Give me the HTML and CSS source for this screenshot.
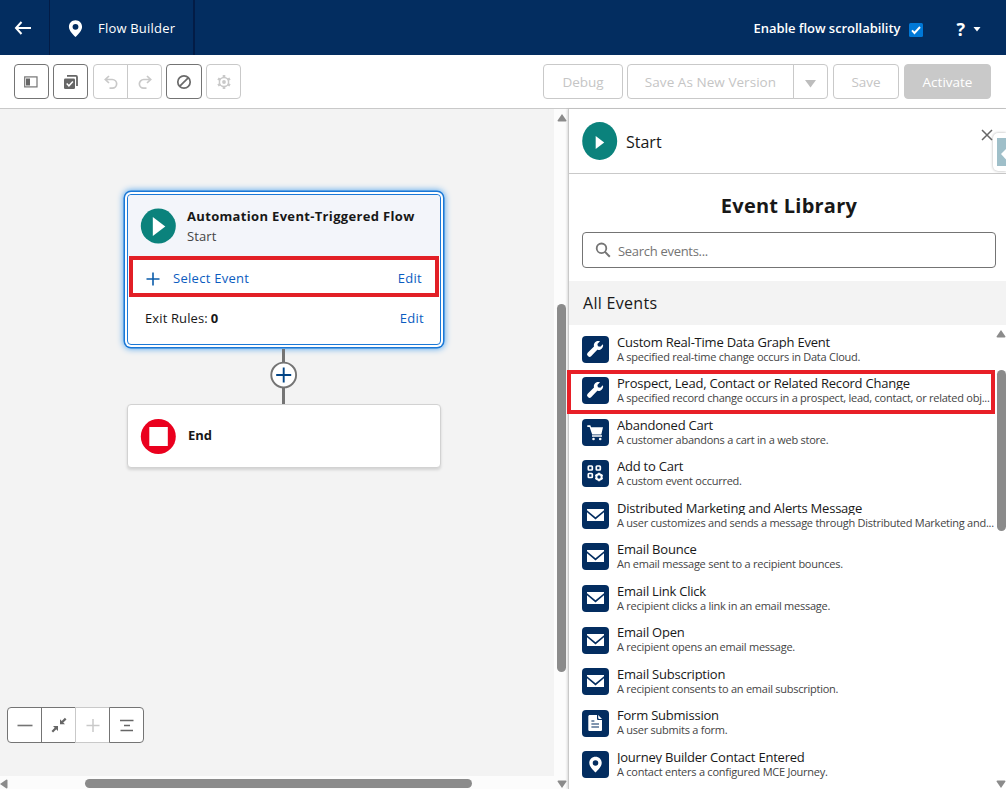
FILE: index.html
```html
<!DOCTYPE html>
<html lang="en">
<head>
<meta charset="utf-8">
<title>Flow Builder</title>
<link rel="stylesheet" href="styles.css">
</head>
<body>
<svg class="symbols" width="0" height="0" aria-hidden="true">
  <symbol id="pin" viewBox="0 0 24 24"><path fill-rule="evenodd" d="M12 1.500c-4.700 0-8.300 3.600-8.300 8.200 0 5 4.700 9.200 8.300 13 3.600-3.800 8.300-8 8.300-13C20.300 5.100 16.700 1.500 12 1.500zm0 4.700a3.700 3.700 0 1 1 0 7.400 3.700 3.700 0 0 1 0-7.400z"/></symbol>
  <symbol id="mail" viewBox="0 0 27 27"><path d="M5 7h17v1.200l-8.500 7-8.500-7z"/><path d="M5 10.300l8.500 7.200 8.500-7.200v8.700H5z"/></symbol>
  <symbol id="wrench" viewBox="0 0 27 27"><path d="M20.900 8.300l-2.600 2.500-2.400-.5-.5-2.300 2.600-2.700c-1.700-.6-3.600-.3-4.900 1-1.200 1.200-1.500 2.700-1.100 4.200l-6.300 6.300a2 2 0 0 0 0 2.900l.5.500a2 2 0 0 0 2.900 0l6.200-6.400c1.500.4 3.200 0 4.300-1.100 1.300-1.200 1.900-2.900 1.300-4.400z"/></symbol>
  <symbol id="cart" viewBox="0 0 27 27"><path d="M5.300 6.300h3l.8 2H21l-1.700 7.200h-9.100L7.600 8h-2.300z"/><path d="M10 16.200h10v1.600H10z"/><circle cx="11.500" cy="20" r="1.300"/><circle cx="18.200" cy="20" r="1.300"/></symbol>
  <symbol id="grid" viewBox="0 0 27 27"><g fill="none" stroke="#fff" stroke-width="1.700"><rect x="6.300" y="6" width="4" height="4" rx=".7"/><rect x="14.300" y="6" width="4" height="4" rx=".7"/><rect x="6.300" y="13.500" width="4" height="4" rx=".7"/><circle cx="17" cy="17" r="2.700" stroke-width="2"/><path d="M17 12.800v1.500M17 19.700v1.500M13.400 14.900l1.200.7M19.400 18.400l1.200.7M13.400 19.100l1.200-.7M19.400 15.600l1.200-.7"/></g></symbol>
  <symbol id="form" viewBox="0 0 27 27"><path d="M8 5h7v3.500c0 1 .6 1.500 1.500 1.500H20v9.700c0 .8-.5 1.300-1.300 1.300H7.800c-1 0-1.500-.5-1.500-1.300V6.500C6.300 5.500 7 5 8 5z"/><path d="M16.200 5l3.800 3.900h-3c-.5 0-.8-.3-.8-.8z"/><path d="M9.400 11h3M9.400 14h7.600M9.400 17h7.600" stroke="#032d60" stroke-width="1.200"/></symbol>
</svg>
<header class="topbar">
  <a class="back"><svg width="18" height="14" viewBox="0 0 18 14"><path d="M7.500 1L2 7l5.500 6M2.300 7H17" fill="none" stroke="#fff" stroke-width="2"/></svg></a>
  <div class="app"><svg class="app-pin" width="19" height="19"><use href="#pin"/></svg><span class="app-name">Flow Builder</span></div>
  <div class="topright">
    <span class="enable">Enable flow scrollability</span>
    <svg class="check" width="14" height="14" viewBox="0 0 14 14"><rect width="14" height="14" rx="1.500" fill="#0078d7"/><path d="M3 7.300l2.500 2.700L11 4" fill="none" stroke="#fff" stroke-width="1.900"/></svg>
    <span class="help">?</span>
    <svg class="caret" width="8" height="5" viewBox="0 0 8 5"><path d="M.5 0h7L4 4.600z" fill="#fff"/></svg>
  </div>
</header>
<nav class="toolbar">
  <div class="btn on"><svg class="toggle" width="14" height="12" viewBox="0 0 14 12"><rect x=".7" y=".9" width="12.300" height="10" fill="none" stroke="#747474" stroke-width="1.200"/><path d="M2 2.500h4v7H2z" fill="#666"/></svg></div>
  <div class="btn on"><svg width="16" height="16" viewBox="0 0 16 16"><path d="M4 1.900h9c.6 0 1 .4 1 1v9" fill="none" stroke="#666" stroke-width="1.800"/><rect x="1" y="4.500" width="11" height="10.500" rx="1.300" fill="#666"/><path d="M3.700 9.500l2.200 2.300 4-4.300" fill="none" stroke="#fff" stroke-width="1.500"/></svg></div>
  <div class="group history">
    <div class="btn"><svg width="16" height="16" viewBox="0 0 16 16"><path d="M6 2L2.300 5.500 6 9M2.500 5.500h6.800a4.300 4.300 0 0 1 0 8.700H6.500" fill="none" stroke="#c9c9c9" stroke-width="1.700"/></svg></div>
    <div class="btn"><svg width="16" height="16" viewBox="0 0 16 16"><path d="M10 2l3.700 3.500L10 9M13.500 5.500H6.700a4.300 4.300 0 0 0 0 8.700h2.800" fill="none" stroke="#c9c9c9" stroke-width="1.700"/></svg></div>
  </div>
  <div class="btn on wide"><svg width="16" height="16" viewBox="0 0 16 16"><circle cx="8" cy="8" r="6.200" fill="none" stroke="#6a6a6a" stroke-width="1.700"/><path d="M3.800 12.200l8.400-8.400" stroke="#6a6a6a" stroke-width="1.700"/></svg></div>
  <div class="btn"><svg width="16" height="16" viewBox="0 0 16 16" fill="none" stroke="#c9c9c9"><circle cx="8" cy="8" r="4.600" stroke-width="1.500"/><circle cx="8" cy="8" r="1.900" fill="#c9c9c9" stroke="none"/><path d="M8 1.100v2.700M8 12.200v2.700M2 4.600l2.300 1.300M11.700 10.100l2.300 1.300M2 11.400l2.300-1.300M11.700 5.900L14 4.600" stroke-width="2.600"/></svg></div>
  <div class="actions">
    <div class="btn debug"><span>Debug</span></div>
    <div class="group">
      <div class="btn saveas"><span>Save As New Version</span></div>
      <div class="btn drop"><svg width="11" height="8" viewBox="0 0 11 8"><path d="M0 0h11L5.500 7.500z" fill="#bdbdbd"/></svg></div>
    </div>
    <div class="btn save"><span>Save</span></div>
    <div class="btn activate"><span>Activate</span></div>
  </div>
</nav>
<main class="work">
  <section class="left">
    <div class="canvas">
      <div class="node start">
        <div class="node-head">
          <svg width="36" height="36" viewBox="0 0 36 36"><circle cx="18.300" cy="18" r="17.500" fill="#0b827c"/><path d="M12.800 9v19L25.300 18.500z" fill="#fff"/></svg>
          <div><div class="node-title"><span>Automation Event-Triggered Flow</span></div><div class="node-sub">Start</div></div>
        </div>
        <div class="node-row select"><svg width="14" height="14" viewBox="0 0 14 14"><path d="M7 .5v13M.5 7h13" stroke="#0b5cab" stroke-width="1.600"/></svg><span class="link">Select Event</span><span class="link edit">Edit</span></div>
        <div class="node-row exit"><span>Exit Rules: </span><b>0</b><span class="link edit">Edit</span></div>
      </div>
      <div class="wire"></div>
      <div class="add"><svg width="28" height="28" viewBox="0 0 28 28"><circle cx="13.700" cy="14" r="12.400" fill="#fff" stroke="#747474" stroke-width="1.900"/><path d="M13.700 6.500v15M6.200 14h15" stroke="#014486" stroke-width="1.900"/></svg></div>
      <div class="node end"><svg width="36" height="36" viewBox="0 0 36 36"><circle cx="18.300" cy="18.500" r="17.500" fill="#ea001e"/><rect x="9.300" y="9" width="18.500" height="19" fill="#fff"/></svg><b class="end-label">End</b></div>
      <div class="zoombar">
        <div class="zb"><svg width="16" height="16"><path d="M.5 8.500h15" stroke="#747474" stroke-width="1.600"/></svg></div>
        <div class="zb"><svg width="16" height="16" viewBox="0 0 16 16" fill="#666" stroke="#666"><path d="M9 2.200v5h5zM7 9H2l5 5z" stroke="none"/><path d="M11 5.300L14.700 1.600M1.300 14.700L5 11" stroke-width="2.200"/></svg></div>
        <div class="zb off"><svg width="16" height="16"><path d="M8 2v13M1.500 8.500h13" stroke="#c9c9c9" stroke-width="1.500"/></svg></div>
        <div class="zb"><svg width="16" height="16"><path d="M1 3.500h13.500M5 8.500h6M1.500 13.500H14" stroke="#666" stroke-width="1.700"/></svg></div>
      </div>
    </div>
    <div class="vscroll"><svg width="10" height="8"><path d="M5 0l4.500 6.500q0 1-1 1h-7q-1 0-1-1z"/></svg><i class="vthumb"></i><svg class="down" width="10" height="8"><path d="M5 8L.5 1.500q0-1 1-1h7q1 0 1 1z"/></svg></div>
    <div class="hscroll"><svg width="8" height="10"><path d="M0 5L6.500.5q1 0 1 1v7q0 1-1 1z"/></svg><i class="hthumb"></i></div>
  </section>
  <aside class="panel">
    <div class="panel-head">
      <svg width="36" height="38" viewBox="0 0 36 38"><ellipse cx="17.700" cy="19" rx="17.500" ry="19" fill="#0b827c"/><path d="M13.700 14v13l8.500-6.500z" fill="#fff"/></svg>
      <span class="panel-title">Start</span>
      <svg class="close" width="12" height="12"><path d="M1 1l10 10M11 1L1 11" stroke="#666" stroke-width="1.500"/></svg>
      <div class="tab"><svg width="9" height="28"><path d="M0 0h9v28H0z" fill="#9fbfc9"/><path d="M9 11L4 16l5 5.500z" fill="#fff"/></svg></div>
    </div>
    <h1 class="heading"><span>Event Library</span></h1>
    <div class="search"><svg width="16" height="16"><circle cx="6.500" cy="6.300" r="4.800" fill="none" stroke="#747474" stroke-width="1.800"/><path d="M9.800 9.600l5 5.200" stroke="#747474" stroke-width="2"/></svg><span>Search events...</span></div>
    <h2 class="section"><span>All Events</span></h2>
    <div class="list-wrap">
      <ul class="list">
        <li><svg><use href="#wrench"/></svg><div class="txt"><div class="t"><span>Custom Real-Time Data Graph Event</span></div><div class="s"><span>A specified real-time change occurs in Data Cloud.</span></div></div></li>
        <li class="marked"><svg><use href="#wrench"/></svg><div class="txt"><div class="t"><span>Prospect, Lead, Contact or Related Record Change</span></div><div class="s"><span>A specified record change occurs in a prospect, lead, contact, or related obj...</span></div></div></li>
        <li><svg><use href="#cart"/></svg><div class="txt"><div class="t">Abandoned Cart</div><div class="s">A customer abandons a cart in a web store.</div></div></li>
        <li><svg><use href="#grid"/></svg><div class="txt"><div class="t">Add to Cart</div><div class="s">A custom event occurred.</div></div></li>
        <li><svg><use href="#mail"/></svg><div class="txt"><div class="t">Distributed Marketing and Alerts Message</div><div class="s">A user customizes and sends a message through Distributed Marketing and...</div></div></li>
        <li><svg><use href="#mail"/></svg><div class="txt"><div class="t">Email Bounce</div><div class="s">An email message sent to a recipient bounces.</div></div></li>
        <li><svg><use href="#mail"/></svg><div class="txt"><div class="t">Email Link Click</div><div class="s">A recipient clicks a link in an email message.</div></div></li>
        <li><svg><use href="#mail"/></svg><div class="txt"><div class="t">Email Open</div><div class="s">A recipient opens an email message.</div></div></li>
        <li><svg><use href="#mail"/></svg><div class="txt"><div class="t">Email Subscription</div><div class="s">A recipient consents to an email subscription.</div></div></li>
        <li><svg><use href="#form"/></svg><div class="txt"><div class="t">Form Submission</div><div class="s">A user submits a form.</div></div></li>
        <li><svg viewBox="0 0 27 27"><use href="#pin" x="4.500" y="4.500" width="18" height="18"/></svg><div class="txt"><div class="t">Journey Builder Contact Entered</div><div class="s">A contact enters a configured MCE Journey.</div></div></li>
      </ul>
      <div class="lscroll"><svg width="10" height="8"><path d="M5 0l4.500 6.500q0 1-1 1h-7q-1 0-1-1z"/></svg><i class="lthumb"></i><svg class="down" width="10" height="8"><path d="M5 8L.5 1.500q0-1 1-1h7q1 0 1 1z"/></svg></div>
    </div>
  </aside>
</main>
</body>
</html>
```
FILE: styles.css
```css
*, *::after { box-sizing: border-box; }
body { margin: 0; width: 1006px; height: 789px; overflow: hidden; background: #fff; color: #181818; font: 13px/18px "Open Sans", "Noto Sans", sans-serif; display: flex; flex-direction: column; white-space: nowrap; }
svg { display: block; flex: none; }
.symbols { position: absolute; }

.topbar { height: 55px; flex: none; background: #032d60; color: #fff; display: flex; }
.back { width: 50px; border-right: 1px solid #031c46; display: flex; align-items: center; padding-left: 14px; }
.app { width: 145px; border-right: 2px solid #031c46; display: flex; align-items: center; padding: 1px 0 0 16px; }
.app-pin { fill: #fff; }
.app-name { margin-left: 13px; letter-spacing: 0.2px; }
.topright { margin-left: auto; padding: 0 25px 0 0; display: flex; align-items: center; }
.enable { font-weight: 600; letter-spacing: -0.05px; padding-top: 1px; }
.check { margin: 4px 33px 0 9px; }
.help { font-weight: 700; font-size: 18px; margin: 3px 8px 0 0; }
.caret { margin-top: 3px; }

.toolbar { height: 54px; flex: none; border-bottom: 1px solid #c9c9c9; display: flex; align-items: center; gap: 4px; padding: 0 15px 0 14px; }
.btn { width: 35px; height: 35px; border: 1px solid #c9c9c9; border-radius: 4px; color: #c5c5c5; display: flex; align-items: center; justify-content: center; font-size: 13.5px; }
.btn.on { border-color: #747474; }
.btn.wide { width: 36px; }
.toggle { margin-right: 2px; }
.group { display: flex; }
.history { margin-left: 1px; }
.group .btn:first-child { border-radius: 4px 0 0 4px; }
.group .btn:last-child { border-radius: 0 4px 4px 0; margin-left: -1px; }
.actions { margin-left: auto; display: flex; }
.debug { width: 80px; margin-right: 4px; }
.saveas { width: 167px; letter-spacing: 0.05px; }
.drop { width: 35px; padding-top: 4px; }
.save { width: 66px; margin: 0 5px; }
.activate { width: 87px; background: #c9c9c9; color: #fff; }

.work { flex: 1; display: flex; min-height: 0; }
.left { width: 568px; display: grid; grid-template: 667px 13px / 554px 14px; }
.canvas { position: relative; background: #f3f3f3; }
.node { position: absolute; left: 127px; width: 314px; background: #fff; border-radius: 4px; }
.start { top: 85px; height: 151px; border: 1px solid #1b78d6; box-shadow: 0 0 0 2px #fff, 0 0 0 3.500px #1b78d6, 0 0 6px 4px #5aa9ee; }
.node-head { height: 61px; background: #f3f5fa; border-radius: 4px 4px 0 0; display: flex; padding: 12px 0 0 12px; gap: 11px; }
.node-head svg { margin-top: 1px; }
.node-title { font-weight: 700; line-height: 18px; letter-spacing: 0.33px; }
.node-sub { color: #444; line-height: 22px; letter-spacing: 0.1px; }
.node-row { display: flex; align-items: center; }
.select { height: 41px; width: 310px; margin-left: 1px; border: 4px solid #e21f26; padding: 2px 13px 0; }
.select svg { margin-top: 2px; }
.select .link:first-of-type { margin-left: 13px; }
.link { color: #0b5cc0; letter-spacing: 0.28px; }
.edit { margin-left: auto; }
.exit { height: 41px; padding: 1px 16px 0 17px; letter-spacing: 0.12px; }
.exit b { margin-left: 3px; }
.wire { position: absolute; left: 282px; top: 240px; width: 3px; height: 56px; background: #747474; }
.add { position: absolute; left: 270px; top: 252px; }
.end { top: 295px; height: 64px; border: 1px solid #d2d2d2; box-shadow: 0 2px 3px #0002; display: flex; align-items: center; padding-left: 12px; }
.end-label { margin: -3px 0 0 12px; }
.zoombar { position: absolute; left: 7px; top: 598px; display: flex; }
.zb { width: 35px; height: 36px; border: 1px solid #747474; background: #fff; margin-right: -1px; display: flex; align-items: center; justify-content: center; }
.zb:first-child { border-radius: 4px 0 0 4px; }
.zb:last-child { border-radius: 0 4px 4px 0; }
.zb.off { border-color: #c9c9c9; }
.zb.off + .zb { z-index: 1; }

.vscroll { grid-row: 1 / 3; grid-column: 2; background: #fcfcfc; fill: #8b8b8b; display: flex; flex-direction: column; padding: 5px 0 1px 3px; }
.vthumb { display: block; width: 9px; height: 368px; margin-top: 182px; background: #8b8b8b; border-radius: 5px; }
.down { margin-top: auto; }
.hscroll { background: #fcfcfc; fill: #8b8b8b; display: flex; align-items: center; padding-top: 2px; }
.hthumb { display: block; width: 387px; height: 9px; margin-left: 77px; background: #8b8b8b; border-radius: 5px; }

.panel { width: 438px; border-left: 1px solid #c9c9c9; display: flex; flex-direction: column; background: #fff; box-shadow: -1px 0 2px #0002; }
.panel-head { position: relative; height: 65px; flex: none; border-bottom: 1px solid #c9c9c9; display: flex; align-items: center; padding-left: 13px; }
.panel-title { font-size: 16px; margin: 1px 0 0 8px; }
.close { margin: 0 13px 12px auto; }
.tab { position: absolute; right: 0; top: 24px; width: 13px; height: 38px; padding: 5px 0 0 4px; background: #fff; border-radius: 5px 0 0 5px; box-shadow: 0 0 3px #0005; }
.heading { margin: 18px 0 1px; text-align: center; font-size: 20px; line-height: 28px; padding-left: 3px; letter-spacing: 0.25px; }
.heading + .search { margin: 11px 10px 0 13px; }
.search { height: 36px; flex: none; border: 1px solid #747474; border-radius: 4px; display: flex; align-items: center; padding-left: 12px; gap: 7px; color: #747474; letter-spacing: -0.3px; }
.search span { padding-top: 2px; }
.section { height: 44px; flex: none; margin: 13px 0 0; background: #f3f3f3; font-size: 16px; font-weight: 400; line-height: 45px; padding-left: 14px; letter-spacing: 0.3px; }
.list-wrap { flex: 1; min-height: 0; display: flex; }
.list { list-style: none; margin: 0; padding: 3.7px 0 0; width: 427px; }
.list li { position: relative; height: 41.55px; display: flex; padding: 7px 0 0 13px; gap: 8px; }
.list li > svg { width: 27px; height: 27px; background: #032d60; border-radius: 4px; fill: #fff; }
.marked::after { content: ""; position: absolute; left: -2px; top: 0; width: 428px; height: 44px; border: 4px solid #e81f27; }
.t { height: 14px; line-height: 15px; overflow: hidden; margin-top: -1.2px; font-size: 13px; letter-spacing: -0.22px; }
.s { font-size: 11px; line-height: 16px; color: #444; letter-spacing: -0.25px; }
.lscroll { width: 10px; fill: #8b8b8b; display: flex; flex-direction: column; padding: 5px 0 1px; }
.lthumb { display: block; width: 9px; height: 161px; margin: 32px 0 0 1px; background: #8b8b8b; border-radius: 5px; }
```
